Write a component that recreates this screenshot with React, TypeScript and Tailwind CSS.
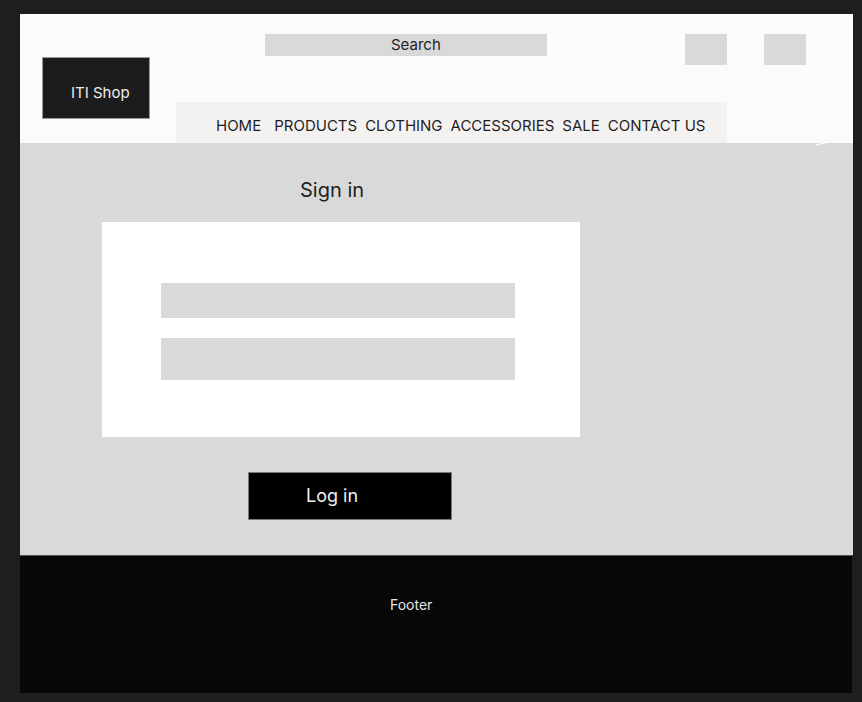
const navItems = ['HOME', 'PRODUCTS', 'CLOTHING', 'ACCESSORIES', 'SALE', 'CONTACT US'];

export default function App() {
  return (
    <div
      className="w-[862px] h-[702px] bg-[#1e1e1e] pt-[14px] pl-[20px] overflow-hidden"
      style={{ fontFamily: 'Inter, "Noto Sans", sans-serif' }}
    >
      {/* Header */}
      <div className="relative w-[833px] h-[129px] bg-[#fcfbfa] flex items-start">
        <div className="ml-[22px] mt-[43px] w-[108px] h-[62px] bg-[#1c1c1c] border border-[#9a9a9a] pl-[28px] pt-[24px]">
          <span className="block text-[15px] leading-[22px] text-[#ececec]">ITI Shop</span>
        </div>

        <div className="ml-[26px] flex flex-col">
          <div className="mt-[20px] flex items-start">
            <div className="ml-[89px] w-[282px] h-[22px] bg-[#d9d9d9] pl-[126px] text-[15px] leading-[22px] text-[#1e1e1e]">
              Search
            </div>
            <div className="ml-[138px] w-[42px] h-[31px] bg-[#d9d9d9]" />
            <div className="ml-[37px] w-[42px] h-[31px] bg-[#d9d9d9]" />
          </div>

          <nav className="mt-[37px] w-[551px] h-[41px] bg-[#f4f2f1] pl-[40px] pt-[13px] flex text-[15px] leading-[22px] text-[#1e1e1e]">
            {navItems.map((item, i) => (
              <span key={item} className={i === 0 ? 'mr-[13px]' : 'mr-[8px]'}>
                {item}
              </span>
            ))}
          </nav>
        </div>

        <svg className="absolute left-[795px] top-[126px]" width="20" height="6" viewBox="0 0 20 6">
          <path d="M1 5 L14 2" stroke="#ffffff" strokeWidth="1.2" strokeLinecap="round" />
        </svg>
      </div>

      {/* Sign in */}
      <main className="w-[833px] h-[412px] bg-[#d9d9d9] flex flex-col items-start">
        <h1 className="ml-[280px] mt-[33px] text-[20px] leading-[28px] text-[#1e1e1e]">Sign in</h1>

        <div className="ml-[82px] mt-[18px] w-[478px] h-[215px] bg-white flex flex-col pl-[59px]">
          <div className="mt-[61px] w-[354px] h-[35px] bg-[#d9d9d9]" />
          <div className="mt-[20px] w-[354px] h-[42px] bg-[#d9d9d9]" />
        </div>

        <button className="ml-[228px] mt-[35px] w-[204px] h-[48px] bg-black border border-[#7a7a7a] flex items-center pl-[57px] text-[18px] leading-[26px] text-[#f0f0f0]">
          Log in
        </button>
      </main>

      {/* Footer */}
      <footer className="w-[832px] h-[138px] bg-[#070707] border-t border-[#555555] pl-[370px] pt-[39px]">
        <span className="block text-[14px] leading-[20px] text-[#e6e6e6]">Footer</span>
      </footer>
    </div>
  );
}
